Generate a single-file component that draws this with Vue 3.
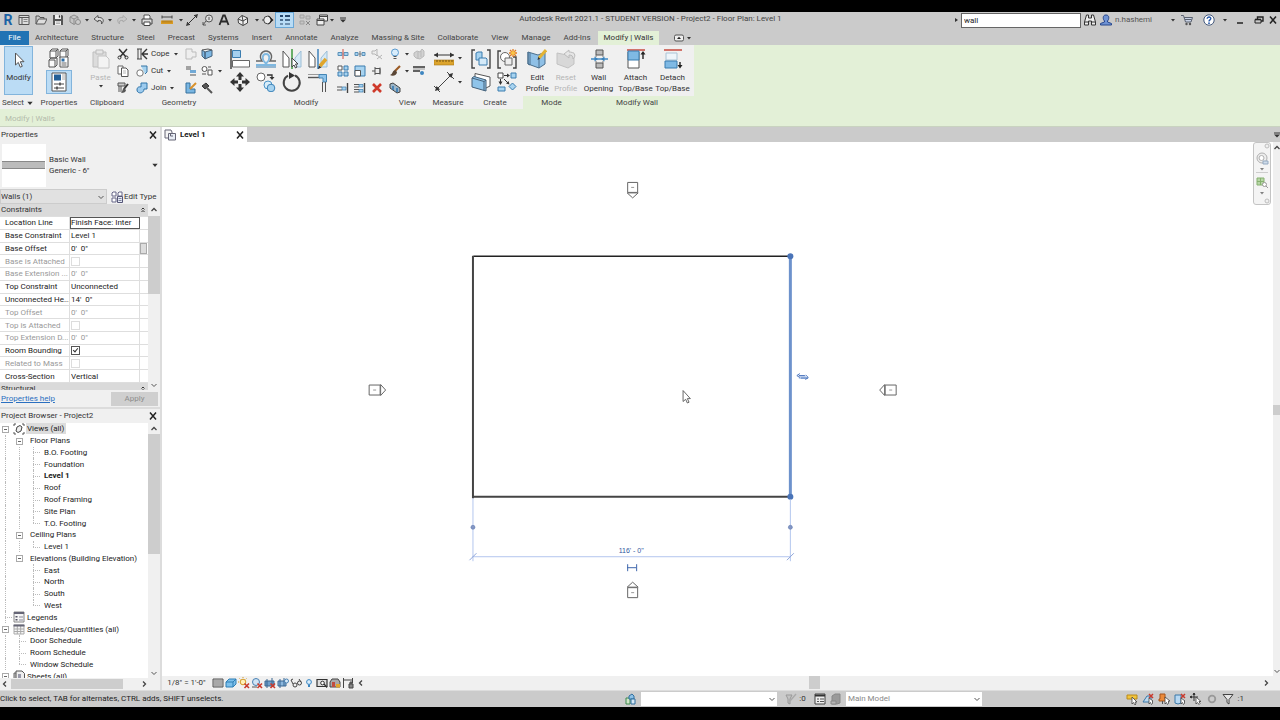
<script setup>
import { ref } from 'vue'

const search = ref('wall')

const quick = [
  { i: 'home', l: 'Home' }, { i: 'open', l: 'Open' }, { i: 'save', l: 'Save' },
  { i: 'sync', l: 'Synchronize' }, { i: 'caret', l: 'Synchronize options' },
  { i: 'undo', l: 'Undo' }, { i: 'caret', l: 'Undo list' },
  { i: 'redo', l: 'Redo' }, { i: 'caret', l: 'Redo list' },
  { i: 'print', l: 'Print' },
  { i: 'ruler', l: 'Measure' }, { i: 'caret', l: 'Measure options' },
  { i: 'dim', l: 'Aligned dimension' }, { i: 'tag', l: 'Tag' }, { i: 'text', l: 'Text' },
  { i: 'house', l: '3D view' }, { i: 'caret', l: '3D view options' },
  { i: 'section', l: 'Section' }, { i: 'thin', l: 'Thin lines', on: true },
  { i: 'closewin', l: 'Close inactive' }, { i: 'switchwin', l: 'Switch windows' },
  { i: 'caret', l: 'Window list' }, { i: 'custom', l: 'Customize' }
]

const tabs = ['Architecture', 'Structure', 'Steel', 'Precast', 'Systems', 'Insert', 'Annotate', 'Analyze',
  'Massing & Site', 'Collaborate', 'View', 'Manage', 'Add-Ins']

const geometry = [
  { i: 'cope', t: 'Cope', a: 'notch', b: 'face' },
  { i: 'cut', t: 'Cut', a: 'beam', b: 'demo', c: true },
  { i: 'join', t: 'Join', a: 'paint', b: 'hammer' }
]
const modifyBig = ['align', 'offset', 'mirrorpick', 'mirrordraw', 'move', 'copy', 'rotate', 'trim']
const modifySmall = ['split', 'splitgap', 'unpin', 'array', 'scale', 'pin', 'trim1', 'trim2', 'delete']
const create = ['assembly', 'group', 'parts', 'similar']
const wallTools = [
  { i: 'opening', a: 'Wall', b: 'Opening' },
  { i: 'attach', a: 'Attach', b: 'Top/Base' },
  { i: 'detach', a: 'Detach', b: 'Top/Base' }
]

const props = [
  { n: 'Location Line', v: 'Finish Face: Inter', focus: true },
  { n: 'Base Constraint', v: 'Level 1' },
  { n: 'Base Offset', v: '0\'  0"', btn: true },
  { n: 'Base is Attached', c: false, off: true },
  { n: 'Base Extension ...', v: '0\'  0"', off: true },
  { n: 'Top Constraint', v: 'Unconnected' },
  { n: 'Unconnected He...', v: '14\'  0"' },
  { n: 'Top Offset', v: '0\'  0"', off: true },
  { n: 'Top is Attached', c: false, off: true },
  { n: 'Top Extension D...', v: '0\'  0"', off: true },
  { n: 'Room Bounding', c: true },
  { n: 'Related to Mass', c: false, off: true },
  { n: 'Cross-Section', v: 'Vertical' }
]

// g: one letter per guide cell. b box, i icon, v line, t tee, l elbow, s blank
const tree = [
  { g: 'bi', t: 'Views (all)', icon: 'views', sel: true },
  { g: 'vb', t: 'Floor Plans' },
  { g: 'vvt', t: 'B.O. Footing' },
  { g: 'vvt', t: 'Foundation' },
  { g: 'vvt', t: 'Level 1', bold: true },
  { g: 'vvt', t: 'Roof' },
  { g: 'vvt', t: 'Roof Framing' },
  { g: 'vvt', t: 'Site Plan' },
  { g: 'vvl', t: 'T.O. Footing' },
  { g: 'vb', t: 'Ceiling Plans' },
  { g: 'vvl', t: 'Level 1' },
  { g: 'vb', t: 'Elevations (Building Elevation)' },
  { g: 'vst', t: 'East' },
  { g: 'vst', t: 'North' },
  { g: 'vst', t: 'South' },
  { g: 'vsl', t: 'West' },
  { g: 'ti', t: 'Legends', icon: 'legend' },
  { g: 'bi', t: 'Schedules/Quantities (all)', icon: 'schedule' },
  { g: 'vt', t: 'Door Schedule' },
  { g: 'vt', t: 'Room Schedule' },
  { g: 'vl', t: 'Window Schedule' },
  { g: 'bi', t: 'Sheets (all)', icon: 'sheets' }
]

const viewBar = ['detail', 'style', 'sun', 'shadow', 'crop', 'showcrop', 'glasses', 'reveal', 'temp', 'analytic', 'constraint']
const statusRight = ['sellink', 'selunder', 'selpin', 'selface', 'drag', 'gear', 'funnel']
</script>

<template>
  <svg class="defs" aria-hidden="true">
    <symbol id="caret" viewBox="0 0 6 6"><path d="M1 2h4L3 4.500z" fill="#333" /></symbol>
    <symbol id="home" viewBox="0 0 12 12"><path d="M1 1.500h10v9H1z" fill="#ddd" stroke="#555" /><path d="M1 3.500h10M4 3.500v7" stroke="#555" /><path d="M5.500 5.500h4M5.500 7.500h4" stroke="#888" /></symbol>
    <symbol id="open" viewBox="0 0 12 12"><path d="M1 10V2h3l1 1.500h4V5" fill="none" stroke="#555" /><path d="M1 10l2.500-5H12l-2.500 5z" fill="#ddd" stroke="#555" /></symbol>
    <symbol id="save" viewBox="0 0 12 12"><path d="M1 1h9l1 1v9H1z" fill="#555" /><path d="M3 1h6v4H3zM3 7h6v4H3z" fill="#eee" /><path d="M7 1.500h1v2H7zM4 8h4M4 9.500h4" stroke="#777" stroke-width=".5" /></symbol>
    <symbol id="sync" viewBox="0 0 12 12"><path d="M1 3l4-2 4 2v5l-4 2.500L1 8zM1 3l4 2 4-2M5 5v5" fill="#c5c5c5" stroke="#8d8d8d" /><circle cx="9" cy="8" r="2.500" fill="#ccc" stroke="#8d8d8d" /></symbol>
    <symbol id="undo" viewBox="0 0 12 12"><path d="M5 1.500L1 5l4 3V6.500c3-.5 4 .5 3.500 3.500C12 6.500 10 3 5 3.500z" fill="#ddd" stroke="#555" /></symbol>
    <symbol id="redo" viewBox="0 0 12 12"><path d="M7 1.500L11 5 7 8V6.500c-3-.5-4 .5-3.500 3.500C0 6.500 2 3 7 3.500z" fill="#c8c8c8" stroke="#aaa" /></symbol>
    <symbol id="print" viewBox="0 0 12 12"><path d="M3 5V1h5l1 1v3" fill="#fff" stroke="#555" /><path d="M1 5h10v5H1z" fill="#ddd" stroke="#444" /><path d="M3 8h6v3.500H3z" fill="#fff" stroke="#444" /></symbol>
    <symbol id="ruler" viewBox="0 0 12 12"><path d="M1 3h10M1 1.500v3M11 1.500v3" stroke="#444" /><path d="M0 6.500h12v3.500H0z" fill="#d99a22" /><path d="M2 6.500v2M4 6.500v2M6 6.500v2M8 6.500v2M10 6.500v2" stroke="#7c5510" stroke-width=".6" /></symbol>
    <symbol id="dim" viewBox="0 0 12 12"><path d="M2 10l8-8M1 8l3 3M8 1l3 3" stroke="#333" /><path d="M0 12l3.500-1L1 8.500zM12 0L8.500 1 11 3.500z" fill="#333" /></symbol>
    <symbol id="tag" viewBox="0 0 12 12"><circle cx="7" cy="4.500" r="3.500" fill="#ddd" stroke="#555" /><path d="M7 3v3M4 7l-3 4M1 8v3h3" stroke="#555" fill="none" /></symbol>
    <symbol id="text" viewBox="0 0 12 12"><path d="M1.500 11L5.200 1.500h1.600L10.500 11M3.500 7.500h5" fill="none" stroke="#2b2b2b" stroke-width="1.800" /></symbol>
    <symbol id="house" viewBox="0 0 12 12"><path d="M1 5l4-3.500L10.500 4v5L6 11.500 1.500 9z" fill="#eee" stroke="#444" /><path d="M1 5l5 2 5-3M6 7v4.500M5 1.500L6 7" fill="none" stroke="#444" /></symbol>
    <symbol id="section" viewBox="0 0 12 12"><circle cx="5.500" cy="6" r="3.800" fill="#eee" stroke="#444" /><path d="M6 1l5.500 5L6 11l3-5z" fill="#222" /><path d="M0 6h2" stroke="#444" /></symbol>
    <symbol id="thin" viewBox="0 0 12 12"><path d="M1 2h3M6 2h5" stroke="#26476b" stroke-width="2" /><path d="M1 6h3M6 6h5" stroke="#26476b" stroke-width="1.500" /><path d="M1 10h3M6 10h5" stroke="#26476b" /></symbol>
    <symbol id="closewin" viewBox="0 0 12 12"><path d="M1 1h4v3H1zM1 7h4v3H1zM7 2h4v3H7z" fill="#c5c5c5" stroke="#a2a2a2" /><path d="M7 7l4 4M11 7l-4 4" stroke="#888" /></symbol>
    <symbol id="switchwin" viewBox="0 0 12 12"><path d="M3.500 1h8v6h-8zM3.500 2.500h8" fill="#eee" stroke="#444" /><path d="M1 5h7v6H1zM1 6.500h7" fill="#eee" stroke="#444" /></symbol>
    <symbol id="custom" viewBox="0 0 6 6"><path d="M0 1h6" stroke="#333" /><path d="M0 2.500h6L3 5.500z" fill="#333" /></symbol>
    <symbol id="binoc" viewBox="0 0 12 12"><path d="M2.500 1h2v3h3V1h2l2 7v3h-4V7h-3v4h-4V8z" fill="#eee" stroke="#333" /><path d="M1 8h3.500M7.500 8H11" stroke="#333" /></symbol>
    <symbol id="user" viewBox="0 0 12 12"><path d="M6 1c3 0 3 2.500 2.500 4.500L7.500 7v1l4 1.500V11H.5V9.500l4-1.500V7l-1-1.500C3 3.500 3 1 6 1z" fill="#6f93d4" stroke="#27468c" /></symbol>
    <symbol id="cart" viewBox="0 0 12 12"><path d="M0 1.500h2.500L4.500 8h5.500l1.500-4.500H3" fill="#c9d3e6" stroke="#5b6270" /><path d="M4 5.500h6.500" stroke="#5b6270" /><circle cx="5.500" cy="10" r="1.200" fill="#555" /><circle cx="9" cy="10" r="1.200" fill="#555" /></symbol>
    <symbol id="help" viewBox="0 0 12 12"><circle cx="6" cy="6" r="5.200" fill="#fff" stroke="#44597c" /><path d="M4.200 4.800C4.200 2.300 8 2.500 7.800 4.700 7.700 5.900 6 6 6 7.400" fill="none" stroke="#2557a8" stroke-width="1.400" /><circle cx="6" cy="9.200" r=".9" fill="#2557a8" /></symbol>
    <symbol id="min" viewBox="0 0 10 10"><path d="M2 8h6" stroke="#222" stroke-width="1.500" /></symbol>
    <symbol id="restore" viewBox="0 0 10 10"><path d="M3.500 4V2H9v4H7" fill="none" stroke="#222" stroke-width="1.400" /><path d="M1 4.500h6V8H1z" fill="none" stroke="#222" /><path d="M1 4.500h6" stroke="#222" stroke-width="1.600" /></symbol>
    <symbol id="close" viewBox="0 0 10 10"><path d="M2 1.500l6 7M8 1.500l-6 7" stroke="#222" stroke-width="1.500" /></symbol>
    <symbol id="panelmode" viewBox="0 0 10 8"><rect x=".5" y="1" width="9" height="6" rx="1.500" fill="#eee" stroke="#555" /><path d="M3 5h4L5 2.800z" fill="#222" /></symbol>

    <symbol id="arrow" viewBox="0 0 12 18"><path d="M2.500 2v12l2.800-2.600 2 4.800 2-.9-2-4.600h3.700z" fill="#fff" stroke="#555" /></symbol>
    <symbol id="typeprops" viewBox="0 0 22 20"><path d="M2 3l2-2h6v7l-2 2H2zM12 3l2-2h6v7l-2 2h-6zM1 12l2-2h6v7l-2 2H1zM2 3h6v7M12 3h6v7M8 3l2-2M18 3l2-2M1 12h6v7" fill="#fafafa" stroke="#555" /><path d="M12 9h8v10h-8z" fill="#fff" stroke="#555" /><path d="M13.500 10.500h3v3h-3z" fill="#2c6ca5" /><path d="M13.500 15h5M13.500 17h5" stroke="#666" /></symbol>
    <symbol id="propspal" viewBox="0 0 16 20"><path d="M1 1h14v18H1z" fill="#fff" stroke="#555" /><path d="M3 2.500h7v6H3z" fill="#235f97" /><path d="M11 3h3M11 5h3M11 7h3" stroke="#aaa" /><path d="M3 12h10M3 16h10" stroke="#444" /><path d="M9 10.500v3M6 14.500v3" stroke="#444" stroke-width="1.500" /></symbol>
    <symbol id="paste" viewBox="0 0 20 20"><path d="M2 3h13v15H2z" fill="#dcdcdc" stroke="#bebebe" /><path d="M5 1h7v4H5z" fill="#e6e6e6" stroke="#bbb" /><path d="M7 7h8l3 3v9H7z" fill="#f3f3f3" stroke="#c4c4c4" /></symbol>
    <symbol id="scissors" viewBox="0 0 12 12"><path d="M2 1l7 8M10 1L3 9" stroke="#333" stroke-width="1.500" /><circle cx="2.500" cy="9.500" r="1.500" fill="none" stroke="#333" /><circle cx="9.500" cy="9.500" r="1.500" fill="none" stroke="#333" /></symbol>
    <symbol id="copyclip" viewBox="0 0 12 12"><path d="M1 1h5v8H1z" fill="#fff" stroke="#666" /><path d="M4.500 3H9l2 2v6.500H4.500z" fill="#fff" stroke="#555" /><path d="M6 6h3M6 8h3" stroke="#999" stroke-width=".7" /></symbol>
    <symbol id="match" viewBox="0 0 12 12"><path d="M1 1h7v3H1zM1 5h4M1 7h4M1 9h4" fill="#ccc" stroke="#555" /><path d="M11 2L7 7" stroke="#333" stroke-width="2" /><path d="M7 6c-2 1-1 3-3 5 3 0 5-1 5-3z" fill="#555" /></symbol>
    <symbol id="cope" viewBox="0 0 12 12"><path d="M2 1v10M5 1v10M1 1h5M1 11h5" stroke="#444" /><path d="M11 1L6 6l5 5M7 6h5" fill="none" stroke="#333" stroke-width="1.400" /></symbol>
    <symbol id="cut" viewBox="0 0 12 12"><path d="M5 1h6v6l-2 2" fill="#a7d3ef" stroke="#3977a5" /><circle cx="4" cy="8" r="3.200" fill="#fff" stroke="#777" /></symbol>
    <symbol id="join" viewBox="0 0 12 12"><path d="M5 1h6v6H8c0 5-7 5-7 1 0-3 2-3.500 4-3z" fill="#9dcbee" stroke="#2f74a9" /></symbol>
    <symbol id="notch" viewBox="0 0 12 12"><path d="M1 1h6v3h4v5H7v2H1z" fill="#eee" stroke="#bbb" /></symbol>
    <symbol id="beam" viewBox="0 0 12 12"><path d="M1 2h5M1 4h5M5 7h6M5 10h6" stroke="#555" /><path d="M5 5h6v3H5z" fill="#70a9d6" /></symbol>
    <symbol id="paint" viewBox="0 0 12 12"><path d="M1 1v10h9V7H5V1z" fill="#79b6e2" stroke="#36719d" /><path d="M11 1L5 7" stroke="#d9912a" stroke-width="2" /></symbol>
    <symbol id="face" viewBox="0 0 12 12"><path d="M1 2l3 2v7L1 8zM4 4l7-2v6l-7 3z" fill="#7db7e3" stroke="#44617a" /><path d="M1 2l6-1 4 1" fill="none" stroke="#555" /></symbol>
    <symbol id="demo" viewBox="0 0 12 12"><circle cx="3.500" cy="4" r="2.500" fill="#fff" stroke="#555" /><path d="M7 5h4v5H7zM7 2h3M1 9h4" fill="#fff" stroke="#555" /></symbol>
    <symbol id="hammer" viewBox="0 0 12 12"><path d="M1 4l4-3 3 3-4 3z" fill="#555" stroke="#333" /><path d="M6 6l5 5" stroke="#555" stroke-width="2" /></symbol>

    <symbol id="align" viewBox="0 0 20 20"><path d="M1 0v20" stroke="#444" stroke-width="1.500" /><path d="M2.500 1.500h8v7h-8z" fill="#a5d0ef" stroke="#3a7caf" /><path d="M2.500 11.500h17V18h-17z" fill="#fff" stroke="#666" /></symbol>
    <symbol id="offset" viewBox="0 0 20 20"><path d="M0 12h6c-3.500-5-.5-10 4-10s7.500 5 4 10h6" fill="none" stroke="#666" stroke-width="1.400" /><path d="M0 16h9.500V14C5 10 6.500 5 10 5s5 5 .5 9v2H20" fill="none" stroke="#7fb8e0" stroke-width="1.800" /><path d="M0 18h20" stroke="#3a7caf" /></symbol>
    <symbol id="mirrorpick" viewBox="0 0 20 20"><path d="M1 2l6 7v9H1z" fill="#fff" stroke="#555" /><path d="M19 2l-6 7v9h6z" fill="#d5e9f6" stroke="#9bbdd6" /><path d="M10 0v20" stroke="#3c9a3c" stroke-width="1.500" /><path d="M10 9v9l2-2 1.500 3 1.500-1-1.500-3H16z" fill="#fff" stroke="#444" /></symbol>
    <symbol id="mirrordraw" viewBox="0 0 20 20"><path d="M1 2l6 7v9H1z" fill="#fff" stroke="#555" /><path d="M19 2l-6 7v9h6z" fill="#d5e9f6" stroke="#9bbdd6" /><path d="M10 0v20" stroke="#3f83bd" stroke-width="1.500" /><path d="M18 10l-6 7" stroke="#e0a62b" stroke-width="3.500" /><path d="M10 20l1-3.500 2.500 2z" fill="#333" /></symbol>
    <symbol id="move" viewBox="0 0 20 20"><path d="M10 0l4 4.500h-2.500V8h-3V4.500H6zM10 20l4-4.500h-2.500V12h-3v3.500H6zM0 10l4.500-4v2.500H8v3H4.500V14zM20 10l-4.500-4v2.500H12v3h3.500V14z" fill="#333" /></symbol>
    <symbol id="copy" viewBox="0 0 20 20"><circle cx="5" cy="5" r="4" fill="#fff" stroke="#666" /><circle cx="12" cy="13" r="4" fill="#d9edf9" stroke="#4b94c8" /><circle cx="15" cy="16" r="3.800" fill="#a7d3f0" stroke="#3a82b8" /><path d="M11 3h5v2" fill="none" stroke="#333" stroke-width="1.300" /><path d="M13.500 5h5L16 8z" fill="#333" /></symbol>
    <symbol id="rotate" viewBox="0 0 20 20"><path d="M13 3.500A8 8 0 1 1 6 3.700" fill="none" stroke="#444" stroke-width="2" /><path d="M7 0l6 3.500L7 7z" fill="#333" /></symbol>
    <symbol id="trim" viewBox="0 0 20 20"><path d="M0 5.500h12" stroke="#555" stroke-width="1.400" /><path d="M0 2.500h13" stroke="#999" /><path d="M11 2.500h7.500V10H15V6h-4z" fill="#8fc4ea" stroke="#4485b4" /><path d="M14.500 10v10M17.500 10v10" stroke="#555" /></symbol>
    <symbol id="split" viewBox="0 0 12 12"><path d="M1 4.500h4v3H1zM7 4.500h4v3H7z" fill="#a9d2ef" stroke="#5a91b8" /><path d="M6 1v10" stroke="#d24d3e" /></symbol>
    <symbol id="splitgap" viewBox="0 0 12 12"><path d="M1 4.500h3v3H1zM8 4.500h3v3H8z" fill="#a9d2ef" stroke="#5a91b8" /><path d="M4.500 6h3M6 3v6" stroke="#777" /></symbol>
    <symbol id="unpin" viewBox="0 0 12 12"><path d="M1 3h3l2-2v7L4 6H1zM6 7l5 4M11 7l-5 4" fill="#eee" stroke="#b5b5b5" /></symbol>
    <symbol id="array" viewBox="0 0 12 12"><path d="M1 1h4v4H1z" fill="#fff" stroke="#555" /><path d="M7 1h4v4H7zM1 7h4v4H1zM7 7h4v4H7z" fill="#a7d3f0" stroke="#3a7caf" /></symbol>
    <symbol id="scale" viewBox="0 0 12 12"><path d="M1 1h10v10H1z" fill="#a7d3f0" stroke="#3a7caf" /><path d="M1 5.500h5.500V11H1z" fill="#fff" stroke="#555" /></symbol>
    <symbol id="pin" viewBox="0 0 12 12"><path d="M1 6h3M4 2v8M4 3.500h5v5H4M9 2.500v7" fill="#eee" stroke="#555" /></symbol>
    <symbol id="trim1" viewBox="0 0 12 12"><path d="M0 5h5M0 8h5" stroke="#555" /><path d="M5 5h4v3H5z" fill="#a7d3f0" stroke="#3a7caf" stroke-width=".7" /><path d="M10.500 1v10" stroke="#444" stroke-width="1.400" /></symbol>
    <symbol id="trim2" viewBox="0 0 12 12"><path d="M0 2.500h5M0 5h5M0 7.500h5M0 10h5" stroke="#555" /><path d="M5 2.500h4V5H5zM5 7.500h4V10H5z" fill="#a7d3f0" stroke="#3a7caf" stroke-width=".7" /><path d="M10.500 1v10" stroke="#444" stroke-width="1.400" /></symbol>
    <symbol id="delete" viewBox="0 0 12 12"><path d="M2 2l8 8M10 2l-8 8" stroke="#cf3a2b" stroke-width="2.600" /></symbol>
    <symbol id="bulb" viewBox="0 0 12 12"><circle cx="6" cy="4.500" r="3.500" fill="#d8ecfb" stroke="#5a9bd0" /><path d="M4.500 8.500h3M4.500 10.500h3" stroke="#555" /></symbol>
    <symbol id="overrideview" viewBox="0 0 12 12"><path d="M1 5l3-2 3 1 2-3 2 2v5l-4 3-4-1-2-2zM5 4v7M8 3v6" fill="#d2d2d2" stroke="#b9b9b9" /></symbol>
    <symbol id="brush" viewBox="0 0 12 12"><path d="M11 1L6 6" stroke="#9a5a25" stroke-width="2.200" /><path d="M6 5c-3 1-2 4-5 5 3 2 7 0 7-3z" fill="#5a4636" /></symbol>
    <symbol id="linework" viewBox="0 0 12 12"><path d="M0 2h12M0 6h7" stroke="#333" stroke-width="1.500" /><path d="M0 4h12" stroke="#777" stroke-width=".7" /><circle cx="9" cy="8" r="2" fill="#3e86c0" /></symbol>
    <symbol id="selbox" viewBox="0 0 12 12"><path d="M1 2l3-1 7 5v4l-3 1-7-5z" fill="#9cb6c9" stroke="#444" /><path d="M4 4v4M8 6v4" stroke="#2f76b0" stroke-width="1.500" /></symbol>
    <symbol id="tape" viewBox="0 0 20 20"><path d="M0 7h20" stroke="#333" /><path d="M0 7l4-2.500v5zM20 7l-4-2.500v5z" fill="#333" /><path d="M0 12h20v5H0z" fill="#dca42c" stroke="#a97614" stroke-width=".6" /><path d="M3 12v2M6 12v2M9 12v2M12 12v2M15 12v2M18 12v2" stroke="#77530e" /></symbol>
    <symbol id="dimbig" viewBox="0 0 20 20"><path d="M3 17L17 3M0 14l6 6M13 0l7 7" stroke="#444" /><path d="M1 19l5-1.500L2.500 14zM19 1l-5 1.500L17.500 6z" fill="#333" /></symbol>
    <symbol id="assembly" viewBox="0 0 20 20"><path d="M4 1H1v18h3M16 1h3v18h-3" fill="none" stroke="#444" stroke-width="1.400" /><path d="M5 4l2-1h4v8H5z" fill="#a7d3f0" stroke="#3a7caf" /><path d="M8 9h7l1 1v6H8z" fill="#d5eaf8" stroke="#3a7caf" /></symbol>
    <symbol id="group" viewBox="0 0 20 20"><path d="M4 2H1v17h3M16 8h3v11h-3" fill="none" stroke="#444" stroke-width="1.400" /><circle cx="8" cy="8" r="4.500" fill="#fff" stroke="#666" /><path d="M8 9h7v7H8z" fill="#eee" stroke="#666" /><path d="M16 0v8M12 4h8M13 1l6 6M19 1l-6 6" stroke="#e27a1c" stroke-width="1.300" /><circle cx="16" cy="4" r="2" fill="#f8c64a" /></symbol>
    <symbol id="parts" viewBox="0 0 20 20"><path d="M4 1.500l15 3.500v9l-4 2L4 11z" fill="#fff" stroke="#555" /><path d="M1 6l2-1.500 12 3.500v11L1 15z" fill="#8fc4ea" stroke="#44617a" /><path d="M1 6l12 3.500v9M13 9.500L15 8" fill="none" stroke="#44617a" /></symbol>
    <symbol id="similar" viewBox="0 0 20 20"><path d="M1 1h5v5H1z" fill="#fff" stroke="#444" /><path d="M14 1h5v5h-5zM1 15h7v4H1z" fill="#a7d3f0" stroke="#3a7caf" /><path d="M15.500 11l3.500 3.500-3.500 3.500-3.500-3.500z" fill="#a7d3f0" stroke="#3a7caf" /><path d="M7 3.500h4M3.500 7v3M7 7l4 4" stroke="#333" /><path d="M10 1.500l3 2-3 2zM1.500 9.500h4l-2 3.500zM12.500 12.500L9 11.500l2.500-2.500z" fill="#333" /></symbol>
    <symbol id="editprofile" viewBox="0 0 20 20"><path d="M1 3l10 3 7-3v12l-6 4-11-4z" fill="#8fc0e6" stroke="#4b6f8c" /><path d="M1 3v12l2 1V4M12 7v12" fill="none" stroke="#4b6f8c" /><path d="M19 1l-7 8" stroke="#e3b334" stroke-width="3" /><path d="M10.500 11l.7-3 2 1.700z" fill="#333" /></symbol>
    <symbol id="resetprofile" viewBox="0 0 20 20"><path d="M1 4l10 2 7-2v11l-6 4-11-4z" fill="#d8d8d8" stroke="#c2c2c2" /><path d="M13 1l-5 4 5 4V6c3 0 4 1 4 4 4-4 1-7-4-7z" fill="#e6e6e6" stroke="#bbb" /></symbol>
    <symbol id="opening" viewBox="0 0 20 20"><path d="M7 1h7v5H7zM7 14h7v5H7z" fill="#bbb" stroke="#555" /><path d="M7 6v8M14 6v8" stroke="#777" stroke-dasharray="2 1" /><path d="M2 10h17" stroke="#4a90c8" stroke-width="1.600" /><path d="M9 10L5.500 7.500v5zM12 10l3.500-2.500v5z" fill="#3a82bc" /></symbol>
    <symbol id="attach" viewBox="0 0 20 20"><path d="M1 1h18" stroke="#c74b40" stroke-width="1.500" /><path d="M2 3h11v16H2z" fill="#fff" stroke="#555" /><path d="M2 2h11v9H2z" fill="#7fb9e4" stroke="#3a7caf" /><path d="M17 4v6" stroke="#222" stroke-width="1.400" /><path d="M14.500 5.500L17 2l2.500 3.500z" fill="#222" /></symbol>
    <symbol id="detach" viewBox="0 0 20 20"><path d="M1 1h18" stroke="#c74b40" stroke-width="1.500" /><path d="M3 4h11v7H3z" fill="#eef5fa" stroke="#aac4d6" /><path d="M2 12h12v7H2z" fill="#7fb9e4" stroke="#3a7caf" /><path d="M17 13v5" stroke="#222" stroke-width="1.400" /><path d="M14.500 16l2.500 3.500 2.500-3.500z" fill="#222" /></symbol>

    <symbol id="plan" viewBox="0 0 12 12"><path d="M1 1h6l1 2v6H1z" fill="#f5f5f5" stroke="#667" /><path d="M4.500 4.500h7V11h-7z" fill="#e8edf5" stroke="#667" /><path d="M6.500 4.500V7h2.500" fill="none" stroke="#667" /></symbol>
    <symbol id="edittype" viewBox="0 0 12 12"><path d="M1 2l1-1h3v4H1zM7 2l1-1h3v4H7zM1 7h4v4H1z" fill="#fff" stroke="#668" /><path d="M6.500 5.500h5v6h-5z" fill="#e5ecf6" stroke="#557" /><path d="M7.500 7.500h3M7.500 9.500h3" stroke="#557" stroke-width=".7" /></symbol>
    <symbol id="chevd" viewBox="0 0 8 8"><path d="M1.500 3L4 5.500 6.500 3" fill="none" stroke="#555" /></symbol>
    <symbol id="chevu" viewBox="0 0 8 8"><path d="M1.500 5L4 2.500 6.500 5" fill="none" stroke="#444" stroke-width="1.300" /></symbol>
    <symbol id="chevl" viewBox="0 0 8 8"><path d="M5 1.500L2.500 4 5 6.500" fill="none" stroke="#444" stroke-width="1.300" /></symbol>
    <symbol id="chevr" viewBox="0 0 8 8"><path d="M3 1.500L5.500 4 3 6.500" fill="none" stroke="#444" stroke-width="1.300" /></symbol>
    <symbol id="collapse" viewBox="0 0 8 8"><path d="M2.500 3.500L4 2l1.500 1.500M2.500 6L4 4.500 5.500 6" fill="none" stroke="#333" /></symbol>
    <symbol id="views" viewBox="0 0 12 12"><path d="M1 3V1h2M9 1h2v2M11 9v2H9M3 11H1V9" fill="none" stroke="#555" /><path d="M4 4l3-1.500L9 4 8 8 5 9.500 3 8z" fill="#eee" stroke="#444" /></symbol>
    <symbol id="legend" viewBox="0 0 12 12"><path d="M1 1h10v10H1z" fill="#f6f6f6" stroke="#888" /><path d="M1 2h10" stroke="#667" stroke-width="2" /><path d="M2.500 5h2v1.500h-2zM2.500 8h2v1.500h-2z" fill="#556" /><path d="M6 6h4M6 9h4" stroke="#889" /></symbol>
    <symbol id="schedule" viewBox="0 0 12 12"><path d="M1 2h10v9H1zM1 6h10M1 8.500h10M4.300 3v8M7.700 3v8" fill="#f6f6f6" stroke="#aaa" /><path d="M.5 2.500h11" stroke="#667" stroke-width="2" /></symbol>
    <symbol id="sheets" viewBox="0 0 12 12"><path d="M1 3h7v8H1z" fill="#ccc" stroke="#666" /><path d="M3 1h6l2.500 2.500V10H3z" fill="#eee" stroke="#555" /><path d="M5 4h3v4H5z" fill="#99a" /></symbol>

    <symbol id="detail" viewBox="0 0 12 12"><path d="M1 2h10v8H1z" fill="#ccc" stroke="#555" /><path d="M1 4h10M1 6h10M1 8h10M3 2v8M5 2v8M7 2v8M9 2v8" stroke="#888" stroke-width=".6" /></symbol>
    <symbol id="style" viewBox="0 0 12 12"><path d="M1 5l3-3h7v5l-3 3H1z" fill="#7cc0ec" stroke="#2f7fb5" /><path d="M1 5h7v5M8 5l3-3" fill="none" stroke="#2f7fb5" /></symbol>
    <symbol id="sun" viewBox="0 0 12 12"><circle cx="5" cy="5" r="2.800" fill="#fff1b8" stroke="#d59a28" /><path d="M5 0v1M0 5h1M1.500 1.500l.8.8M8.500 1.500l-.8.8" stroke="#d59a28" /><path d="M6.500 6.500l4.500 4.500M11 6.500L6.500 11" stroke="#c93a2c" stroke-width="1.600" /></symbol>
    <symbol id="shadow" viewBox="0 0 12 12"><circle cx="5" cy="5" r="3.500" fill="#cfe4f5" stroke="#4981b3" /><path d="M1 10h5" stroke="#888" stroke-width="1.500" /><path d="M6.500 6.500l4.500 4.500M11 6.500L6.500 11" stroke="#c93a2c" stroke-width="1.600" /></symbol>
    <symbol id="crop" viewBox="0 0 12 12"><path d="M1 4h9v5H1zM3 2v9M8 1v8" fill="#6d9fcb" stroke="#3b6791" /><path d="M6.500 6.500l4.500 4.500M11 6.500L6.500 11" stroke="#c93a2c" stroke-width="1.600" /></symbol>
    <symbol id="showcrop" viewBox="0 0 12 12"><path d="M1 4h8v5H1zM3 2v9M7 1v8" fill="#8bb7de" stroke="#3b6791" /><circle cx="9.500" cy="4" r="2" fill="#d8ecfb" stroke="#4981b3" /></symbol>
    <symbol id="glasses" viewBox="0 0 12 12"><circle cx="5" cy="8" r="2" fill="none" stroke="#444" /><circle cx="9.500" cy="6" r="2" fill="none" stroke="#444" /><path d="M3 7L1 3l2-1M11 5l-2-3" fill="none" stroke="#444" /></symbol>
    <symbol id="reveal" viewBox="0 0 12 12"><circle cx="6" cy="5" r="2.400" fill="#d8ecfb" stroke="#3a86c2" /><path d="M6 7.500V10" stroke="#3a86c2" stroke-width="2" /></symbol>
    <symbol id="temp" viewBox="0 0 12 12"><path d="M1 2.500h10v7H1z" fill="#ddd" stroke="#333" stroke-width="1.200" /><circle cx="6.500" cy="6" r="1.800" fill="#fff" stroke="#333" /><path d="M8 7l3 3.500" stroke="#333" stroke-width="1.200" /></symbol>
    <symbol id="analytic" viewBox="0 0 12 12"><path d="M1 5l2-3h6l2 3v5H1z" fill="#aaa" stroke="#444" /><path d="M3 5h3v5H3z" fill="#c14d3f" /><path d="M7 7h4v3.500H7z" fill="#e2a72d" /></symbol>
    <symbol id="constraint" viewBox="0 0 12 12"><path d="M1.500 1v10M1 3h10M10.500 1v5" stroke="#444" fill="none" /><path d="M7 7h4v4H7zM8 7V5h2v2" fill="#888" stroke="#444" /></symbol>

    <symbol id="workset" viewBox="0 0 12 12"><path d="M1 5h4v6H1z" fill="#cfe5c8" stroke="#3f8a4e" /><path d="M4 3l3-2 2 2v3H4z" fill="#8ec1e6" stroke="#2f6f9f" /><path d="M6 6h4v5H6z" fill="#d5e8f6" stroke="#2f6f9f" /></symbol>
    <symbol id="editable" viewBox="0 0 12 12"><path d="M1 2h6L5 6v5L3 10V6z" fill="#c2c2c2" stroke="#999" /><path d="M11 1L5 8" stroke="#aaa" stroke-width="1.400" /></symbol>
    <symbol id="options" viewBox="0 0 12 12"><path d="M1 1h10v10H1z" fill="#eee" stroke="#444" /><path d="M1 2.500h10" stroke="#333" stroke-width="2" /><path d="M3 6h2M6 6h4M3 8.500h2M6 8.500h4" stroke="#555" /></symbol>
    <symbol id="optset" viewBox="0 0 12 12"><path d="M2 3l3-2h5v9l-3 1H2z" fill="#9a9a9a" stroke="#888" /><path d="M1 8h5v3H1z" fill="#b5b5b5" stroke="#888" /></symbol>
    <symbol id="sellink" viewBox="0 0 12 12"><path d="M1 2h10v4H1z" fill="#f2c53d" stroke="#b98a1a" /><path d="M6 4v7l1.500-1.500L9 12l1-1-1-2h2z" fill="#fff" stroke="#444" stroke-width=".8" /></symbol>
    <symbol id="selunder" viewBox="0 0 12 12"><path d="M1 9l4-6h4v6z" fill="#bcd9ef" stroke="#3b78a8" /><path d="M7 1l4 4M11 1L7 5" stroke="#c93a2c" stroke-width="1.500" /><path d="M7 5v6l1.500-1.500 1 2 1-1V8H11z" fill="#fff" stroke="#444" stroke-width=".8" /></symbol>
    <symbol id="selpin" viewBox="0 0 12 12"><path d="M2 1h5v5h1v2H1V6h1z" fill="#eb8b3a" stroke="#a8551a" /><path d="M4.500 8v3" stroke="#555" /><path d="M7 4v7l1.500-1.500 1 2 1-1V8H12z" fill="#fff" stroke="#444" stroke-width=".8" /></symbol>
    <symbol id="selface" viewBox="0 0 12 12"><path d="M1 2h6v8l-3 1-3-1z" fill="#b7d8f2" stroke="#3b78a8" /><path d="M7 1l4 4M11 1L7 5" stroke="#c93a2c" stroke-width="1.500" /><path d="M7 5v6l1.500-1.500 1 2 1-1V8H11z" fill="#fff" stroke="#444" stroke-width=".8" /></symbol>
    <symbol id="drag" viewBox="0 0 12 12"><path d="M4 0v8M0 4h8M4 0L3 1.500h2zM0 4l1.500-1v2z" stroke="#333" /><path d="M6 4v7l1.500-1.500 1.500 2 1-1-1-2h2z" fill="#fff" stroke="#444" stroke-width=".8" /></symbol>
    <symbol id="gear" viewBox="0 0 12 12"><circle cx="6" cy="6" r="3.300" fill="none" stroke="#999" stroke-width="1.800" /></symbol>
    <symbol id="funnel" viewBox="0 0 12 12"><path d="M1 1.500h10L7 6.500V11L5 9.500v-3z" fill="#e6e6e6" stroke="#444" /></symbol>
    <symbol id="wheel" viewBox="0 0 14 14"><circle cx="7" cy="6" r="5" fill="#eee" stroke="#b0b0b0" /><circle cx="6.500" cy="6" r="2.500" fill="#fff" stroke="#b0b0b0" /><path d="M8 9h5v3H8z" fill="#cfdcea" stroke="#94a9c0" /></symbol>
    <symbol id="zoomregion" viewBox="0 0 14 14"><path d="M2 2h7v7H2zM2 5.500h7M5.500 2v7" fill="#b7d7a6" stroke="#86b070" /><circle cx="9.500" cy="8.500" r="2" fill="#fff" stroke="#999" /><path d="M11 10l2 2" stroke="#999" /></symbol>
    <symbol id="ring" viewBox="0 0 6 6"><circle cx="3" cy="3" r="2" fill="#eee" stroke="#999" /></symbol>
  </svg>

  <div class="app">
    <header class="titlebar">
      <nav class="quick" aria-label="Quick access">
        <button class="logo" aria-label="Application menu">R</button>
        <button v-for="(q, n) in quick" :key="n" :class="{ on: q.on }" :aria-label="q.l">
          <svg :class="q.i === 'caret' || q.i === 'custom' ? 's6' : 's12'"><use :href="'#' + q.i" /></svg>
        </button>
      </nav>
      <h1>Autodesk Revit 2021.1 - STUDENT VERSION - Project2 - Floor Plan: Level 1</h1>
      <div class="info">
        <span class="tri"></span>
        <input v-model="search" type="text" aria-label="Search">
        <button aria-label="Find"><svg class="s12"><use href="#binoc" /></svg></button>
        <svg class="s12"><use href="#user" /></svg>
        <button class="name">n.hashemi</button>
        <button aria-label="Account menu"><svg class="s6"><use href="#caret" /></svg></button>
        <button aria-label="Store"><svg class="s12"><use href="#cart" /></svg></button>
        <button aria-label="Help"><svg class="s12"><use href="#help" /></svg></button>
        <button aria-label="Help menu"><svg class="s6"><use href="#caret" /></svg></button>
        <button aria-label="Minimize"><svg class="s10"><use href="#min" /></svg></button>
        <button aria-label="Restore"><svg class="s10"><use href="#restore" /></svg></button>
        <button aria-label="Close"><svg class="s10"><use href="#close" /></svg></button>
      </div>
    </header>

    <nav class="tabs" aria-label="Ribbon tabs">
      <button class="file">File</button>
      <button v-for="t in tabs" :key="t">{{ t }}</button>
      <button class="ctx">Modify | Walls</button>
      <button class="mode" aria-label="Ribbon display"><svg class="pm"><use href="#panelmode" /></svg><svg class="s6"><use href="#caret" /></svg></button>
    </nav>

    <div class="ribbon">
      <section class="panel p-select">
        <div class="body">
          <button class="tall on"><svg class="arrow"><use href="#arrow" /></svg><span>Modify</span></button>
        </div>
        <h2>Select <svg class="s8"><use href="#caret" /></svg></h2>
      </section>
      <section class="panel p-props">
        <div class="body stack">
          <button aria-label="Type properties"><svg class="s22"><use href="#typeprops" /></svg></button>
          <button class="on" aria-label="Properties palette"><svg class="s20"><use href="#propspal" /></svg></button>
        </div>
        <h2>Properties</h2>
      </section>
      <section class="panel p-clip">
        <div class="body">
          <button class="tall off" disabled><svg class="s20"><use href="#paste" /></svg><span>Paste</span><svg class="s6"><use href="#caret" /></svg></button>
          <div class="rows">
            <button aria-label="Cut to clipboard"><svg class="s12"><use href="#scissors" /></svg></button>
            <button aria-label="Copy to clipboard"><svg class="s12"><use href="#copyclip" /></svg></button>
            <button aria-label="Match type"><svg class="s12"><use href="#match" /></svg></button>
          </div>
        </div>
        <h2>Clipboard</h2>
      </section>
      <section class="panel p-geo">
        <div class="body rows">
          <div v-for="g in geometry" :key="g.t" class="georow">
            <button class="lab"><svg class="s12"><use :href="'#' + g.i" /></svg><span>{{ g.t }}</span><svg class="s6"><use href="#caret" /></svg></button>
            <button :aria-label="g.a"><svg class="s12"><use :href="'#' + g.a" /></svg></button>
            <button :aria-label="g.b"><svg class="s12"><use :href="'#' + g.b" /></svg></button>
            <svg v-if="g.c" class="s6"><use href="#caret" /></svg>
          </div>
        </div>
        <h2>Geometry</h2>
      </section>
      <section class="panel p-mod">
        <div class="body">
          <div class="bigs">
            <button v-for="m in modifyBig" :key="m" :aria-label="m"><svg class="s20"><use :href="'#' + m" /></svg></button>
          </div>
          <div class="smalls">
            <button v-for="m in modifySmall" :key="m" :aria-label="m"><svg class="s12"><use :href="'#' + m" /></svg></button>
          </div>
        </div>
        <h2>Modify</h2>
      </section>
      <section class="panel p-view">
        <div class="body viewgrid">
          <button aria-label="Hide"><svg class="s12"><use href="#bulb" /></svg></button>
          <svg class="s6"><use href="#caret" /></svg>
          <button aria-label="Override view"><svg class="s12"><use href="#overrideview" /></svg></button>
          <button aria-label="Override graphics"><svg class="s12"><use href="#brush" /></svg></button>
          <svg class="s6"><use href="#caret" /></svg>
          <button aria-label="Linework"><svg class="s12"><use href="#linework" /></svg></button>
          <button aria-label="Selection box"><svg class="s12"><use href="#selbox" /></svg></button>
        </div>
        <h2>View</h2>
      </section>
      <section class="panel p-meas">
        <div class="body stack">
          <button class="wide" aria-label="Measure"><svg class="s20"><use href="#tape" /></svg><svg class="s6"><use href="#caret" /></svg></button>
          <button class="wide" aria-label="Dimension"><svg class="s20"><use href="#dimbig" /></svg><svg class="s6"><use href="#caret" /></svg></button>
        </div>
        <h2>Measure</h2>
      </section>
      <section class="panel p-create">
        <div class="body">
          <div class="bigs two">
            <button v-for="m in create" :key="m" :aria-label="m"><svg class="s20"><use :href="'#' + m" /></svg></button>
          </div>
        </div>
        <h2>Create</h2>
      </section>
      <section class="panel p-mode green">
        <div class="body">
          <button class="tall"><svg class="s20"><use href="#editprofile" /></svg><span>Edit<br>Profile</span></button>
          <button class="tall off" disabled><svg class="s20"><use href="#resetprofile" /></svg><span>Reset<br>Profile</span></button>
        </div>
        <h2>Mode</h2>
      </section>
      <section class="panel p-wall green">
        <div class="body">
          <button v-for="w in wallTools" :key="w.i" class="tall"><svg class="s20"><use :href="'#' + w.i" /></svg><span>{{ w.a }}<br>{{ w.b }}</span></button>
        </div>
        <h2>Modify Wall</h2>
      </section>
    </div>
    <div class="optbar">Modify | Walls</div>

    <main class="work">
      <aside class="side">
        <section class="props">
          <header class="cap"><h2>Properties</h2><button aria-label="Close properties"><svg class="s10"><use href="#close" /></svg></button></header>
          <button class="type">
            <span class="thumb"><span></span></span>
            <span class="tname">Basic Wall<br>Generic - 6"</span>
            <svg class="s8"><use href="#caret" /></svg>
          </button>
          <div class="filter">
            <span class="sel"><select aria-label="Element filter"><option>Walls (1)</option></select><svg class="s8"><use href="#chevd" /></svg></span>
            <button><svg class="s12"><use href="#edittype" /></svg>Edit Type</button>
          </div>
          <div class="gridwrap">
            <div class="grid">
              <div class="ghead">Constraints<svg class="s8"><use href="#collapse" /></svg></div>
              <table>
                <tbody>
                  <tr v-for="(p, n) in props" :key="p.n" :class="{ off: p.off }">
                    <th scope="row"><label :for="'p' + n">{{ p.n }}</label></th>
                    <td :class="{ focus: p.focus }">
                      <input v-if="p.v === undefined" :id="'p' + n" type="checkbox" :checked="p.c" :disabled="p.off">
                      <input v-else :id="'p' + n" type="text" :value="p.v" :disabled="p.off">
                    </td>
                    <td class="end"><button v-if="p.btn" aria-label="Associate parameter"></button></td>
                  </tr>
                </tbody>
              </table>
              <div class="ghead">Structural<svg class="s8"><use href="#collapse" /></svg></div>
            </div>
            <div class="vbar long"><svg class="s8"><use href="#chevu" /></svg><i></i><svg class="s8"><use href="#chevd" /></svg></div>
          </div>
          <footer><a href="#help">Properties help</a><button disabled>Apply</button></footer>
        </section>
        <section class="browser">
          <header class="cap"><h2>Project Browser - Project2</h2><button aria-label="Close browser"><svg class="s10"><use href="#close" /></svg></button></header>
          <div class="treewrap">
            <ul>
              <li v-for="(r, n) in tree" :key="n" :class="{ root: r.icon }">
                <template v-for="(c, k) in r.g" :key="k">
                  <svg v-if="c === 'i'" class="ticon"><use :href="'#' + r.icon" /></svg>
                  <span v-else :class="['g', 'g-' + c]"></span>
                </template>
                <span :class="['txt', { sel: r.sel, bold: r.bold }]">{{ r.t }}</span>
              </li>
            </ul>
            <div class="vbar longer"><svg class="s8"><use href="#chevu" /></svg><i></i><svg class="s8"><use href="#chevd" /></svg></div>
          </div>
          <div class="hbar"><svg class="s8"><use href="#chevl" /></svg><i></i><svg class="s8"><use href="#chevr" /></svg></div>
        </section>
      </aside>

      <section class="view">
        <div class="doctabs">
          <div class="doc"><svg class="s12"><use href="#plan" /></svg><b>Level 1</b><button aria-label="Close view"><svg class="s10"><use href="#close" /></svg></button></div>
          <button class="more" aria-label="View list"><svg class="s6"><use href="#custom" /></svg></button>
        </div>
        <div class="stage">
          <svg class="plan" viewBox="0 0 1111 535" role="img" aria-label="Floor plan">
            <path d="M311 114.500H628" stroke="#222" stroke-width="1.600" />
            <path d="M310.500 114V357" stroke="#444" stroke-width="2" />
            <path d="M310 355.500H628" stroke="#444" stroke-width="2" />
            <path d="M628.500 114V356" stroke="#6d92cc" stroke-width="3" />
            <g fill="#4a74b8"><circle cx="628.500" cy="114.500" r="3" /><circle cx="628.500" cy="355.500" r="3" /></g>
            <g stroke="#b3c6ee" fill="none"><path d="M310.500 357V420M628.500 358V420M310 415.500H629" /><path d="M307 419l7-7M625 419l7-7" stroke="#8fa6da" /></g>
            <g fill="#8497c4" stroke="#5f78b0" stroke-width=".6"><circle cx="310.500" cy="386" r="2" /><circle cx="628.500" cy="386" r="2" /></g>
            <text x="469" y="412" text-anchor="middle" class="dimtext">116' - 0"</text>
            <path d="M465.500 423v7M474.500 423v7M465 426.500h9" stroke="#3e66ad" fill="none" />
            <path d="M637 234.500h7M637 236.500h9" stroke="#a9c0e6" stroke-width="1.500" /><path d="M638 232l-3 2 3 2M643 234h-6M644 233.500l2.500 2.500-3 2M639 236.500h7" stroke="#4f78bf" fill="none" />
            <g stroke="#666" fill="#fff">
              <path d="M465 51l5.500 5 5.500-5z" /><path d="M465.500 40.500h10v10h-10z" />
              <path d="M465 446l5.500-5 5.500 5z" /><path d="M465.500 446.500h10v10h-10z" />
              <path d="M218 243l5 5.500-5 5.500z" /><path d="M206.500 243.500h11v10h-11z" />
              <path d="M723 243l-5 5.500 5 5.500z" /><path d="M723.500 243.500h11v10h-11z" />
            </g>
            <path d="M469 45.500h3M469 451.500h3M210.500 248.500h3M727.500 248.500h3" stroke="#999" />
            <path d="M521 249v11l2.600-2.200 1.700 3.700 1.700-.8-1.700-3.600h3z" fill="#fff" stroke="#444" stroke-width=".8" />
          </svg>
          <div class="navbar">
            <svg class="s6 r"><use href="#ring" /></svg>
            <button aria-label="Steering wheel"><svg class="s14"><use href="#wheel" /></svg></button>
            <svg class="s6"><use href="#caret" /></svg>
            <hr>
            <button aria-label="Zoom region"><svg class="s14"><use href="#zoomregion" /></svg></button>
            <svg class="s6"><use href="#caret" /></svg>
            <svg class="s6 r last"><use href="#ring" /></svg>
          </div>
          <div class="vbar thin"><svg class="s8"><use href="#chevu" /></svg><i></i><svg class="s8"><use href="#chevd" /></svg></div>
        </div>
        <div class="viewctl">
          <button class="scale">1/8" = 1'-0"</button>
          <button v-for="v in viewBar" :key="v" :aria-label="v"><svg class="s12"><use :href="'#' + v" /></svg></button>
          <button aria-label="Less"><svg class="s8"><use href="#chevl" /></svg></button>
          <div class="track"><i></i></div>
          <svg class="s8"><use href="#chevr" /></svg>
        </div>
      </section>
    </main>

    <footer class="status">
      <p>Click to select, TAB for alternates, CTRL adds, SHIFT unselects.</p>
      <div class="mid">
        <button aria-label="Worksets"><svg class="s12"><use href="#workset" /></svg></button>
        <span class="sel"><select aria-label="Active workset"><option></option></select><svg class="s8"><use href="#chevd" /></svg></span>
        <button class="cnt"><svg class="s12"><use href="#editable" /></svg>:0</button>
        <button aria-label="Design options"><svg class="s12"><use href="#options" /></svg></button>
        <button aria-label="Add to set"><svg class="s12"><use href="#optset" /></svg></button>
        <span class="sel"><select aria-label="Active design option"><option>Main Model</option></select><svg class="s8"><use href="#chevd" /></svg></span>
      </div>
      <div class="right">
        <button v-for="s in statusRight" :key="s" :aria-label="s"><svg class="s12"><use :href="'#' + s" /></svg></button>
        <span>:1</span>
      </div>
    </footer>
  </div>
</template>

<style>
html, body { margin: 0; background: #000; }
</style>

<style scoped>
.defs { display: none; }
.app {
  height: 100vh; box-sizing: border-box; padding: 12px 0 13px; background: #000; overflow: hidden;
  display: flex; flex-direction: column;
  font: 8px/12px Roboto, "Liberation Sans", sans-serif; color: #333;
}
h1, h2, p, ul { margin: 0; padding: 0; font-size: 8px; font-weight: 400; }
button, input, select { font: inherit; color: inherit; padding: 0; margin: 0; border: 0; background: none; }
button { display: flex; align-items: center; justify-content: center; }
svg { display: block; flex: none; }
.s6 { width: 6px; height: 6px; }
.s8 { width: 8px; height: 8px; }
.s10 { width: 10px; height: 10px; }
.s12 { width: 12px; height: 12px; }
.s14 { width: 14px; height: 14px; }
.s20 { width: 20px; height: 20px; }
.s22 { width: 22px; height: 20px; }

.titlebar { display: flex; align-items: flex-start; height: 19px; background: #cbcbcb; }
.quick {
  display: grid; height: 16px; align-items: center;
  grid-template-columns: 16px 16px 18px 16px 17px 8px 15px 8px 16px 8px 17px 23px 5px 17px 15px 17px 22px 6px 15px 19px 21px 13px 8px 14px;
}
.quick .on { height: 14px; margin: 0 1px; background: #b8dcf6; box-shadow: 0 0 0 1px #6aa7d6; }
.logo { font-size: 14px; font-weight: 700; color: #1d62a5; }
.titlebar h1 { flex: 1; line-height: 14px; text-align: center; white-space: nowrap; color: #444; }
.info {
  display: grid; align-items: center; justify-items: center; height: 16px;
  grid-template-columns: 10px 120px 17px 16px 54px 10px 18px 26px 6px 24px 14px 14px;
}
.info input { width: 100%; height: 15px; box-sizing: border-box; border: 1px solid #666; background: #fff; padding: 0 2px; color: #222; }
.info .name { justify-self: start; padding-left: 1px; color: #555; }
.tri { border: solid transparent; border-width: 2px 0 2px 3px; border-left-color: #333; }

.tabs { display: flex; gap: 13px; height: 14px; background: #cbcbcb; color: #444; }
.tabs button { white-space: nowrap; }
.tabs .file { width: 29px; margin-right: -7px; background: #2173b4; color: #fff; }
.tabs .ctx { margin: 0 2px 0 -6px; padding: 0 6px; background: #e3f0d7; color: #333; }
.tabs .mode { gap: 2px; }
.pm { width: 10px; height: 8px; }

.ribbon { display: flex; height: 64px; background: #e3f0d7; }
.panel { display: flex; flex-direction: column; flex: none; background: #f0f0f0; }
.panel h2 { display: flex; justify-content: center; align-items: center; height: 13px; line-height: 13px; white-space: nowrap; color: #444; }
.panel .body { height: 51px; display: flex; }
.green { background: #e3f0d7; }
.green .body { background: #f0f0f0; }
.p-select { width: 36px; }
.p-select h2 { gap: 2px; }
.p-props { width: 46px; }
.p-clip { width: 50px; }
.p-geo { width: 94px; }
.p-mod { width: 160px; }
.p-view { width: 43px; }
.p-meas { width: 38px; }
.p-create { width: 56px; }
.p-mode { width: 57px; }
.p-wall { width: 114px; }
.p-wall .body { padding-right: 3px; }
.tall { flex: 1; flex-direction: column; justify-content: flex-start; padding-top: 4px; line-height: 11px; }
.tall span { margin-top: 3px; }
.off { color: #b5b5b5; }
.on { background: #bbdcf5; box-shadow: inset 0 0 0 1px #82b4dc; }
.p-select .tall { margin: 1px 3px 1px 4px; }
.arrow { width: 12px; height: 18px; margin-top: 1px; }
.panel .stack { flex-direction: column; align-items: center; padding-top: 1px; box-sizing: border-box; }
.stack button { height: 24px; width: 26px; }
.stack .wide { width: 34px; gap: 3px; }
.p-clip .body { padding-right: 3px; }
.rows { display: flex; flex-direction: column; justify-content: space-around; }
.p-clip .tall { padding-left: 2px; }
.panel .body.rows { flex-direction: column; }
.georow { display: flex; align-items: center; gap: 4px; padding-left: 4px; }
.georow .lab { width: 45px; justify-content: flex-start; gap: 3px; }
.bigs { display: grid; grid-template-columns: repeat(4, 26px); grid-template-rows: 23px 23px; padding: 2px 0 0 1px; height: 46px; }
.bigs.two { grid-template-columns: 26px 26px; }
.smalls { display: grid; grid-template-columns: repeat(3, 17px); padding-left: 3px; }
.panel .viewgrid { display: grid; grid-template-columns: 18px 6px 18px; justify-items: center; align-items: center; }

.optbar { height: 17px; line-height: 19px; padding-left: 5px; background: #e3f0d7; color: #b3bbab; border-bottom: 1px solid #c9d3c0; }

.work { flex: 1; min-height: 0; display: flex; background: #fff; }
.side { width: 160px; flex: none; display: flex; flex-direction: column; border-right: 2px solid #dcdcdc; background: #f0f0f0; }
.cap { display: flex; justify-content: space-between; align-items: center; height: 15px; padding: 0 2px 0 1px; }
.type { width: 100%; height: 46px; justify-content: flex-start; gap: 3px; text-align: left; line-height: 11px; padding: 0 1px 0 2px; }
.thumb { width: 44px; height: 43px; background: #fff; display: flex; align-items: center; }
.thumb span { width: 43px; height: 6px; background: #bbb; border: solid #888; border-width: 1px 0; }
.tname { flex: 1; }
.filter { display: flex; height: 15px; gap: 4px; padding-top: 1px; }
.filter button { gap: 1px; white-space: nowrap; }
.sel { position: relative; display: flex; align-items: center; justify-content: flex-end; }
.sel svg { position: absolute; right: 1px; pointer-events: none; }
.sel select { appearance: none; width: 100%; height: 100%; border-radius: 0; }
.filter .sel { width: 107px; background: #e1e1e1; border: 1px solid #ccc; box-sizing: border-box; }
.gridwrap { display: flex; height: 186px; overflow: hidden; }
.grid { flex: 1; background: #fff; }
.ghead { display: flex; justify-content: space-between; align-items: center; height: 12px; padding: 0 1px; background: #dadada; }
table { width: 100%; height: 167px; border-collapse: collapse; table-layout: fixed; }
th, td { padding: 0; font-weight: 400; text-align: left; line-height: 11px; border: 1px solid #dedede; white-space: nowrap; overflow: hidden; color: #222; }
th { width: 64px; padding-left: 5px; border-left: 0; }
.end { width: 8px; border-right: 0; }
.end button { width: 7px; height: 11px; background: #ddd; border: 1px solid #aaa; }
.focus { outline: 1px solid #555; outline-offset: -1px; }
tr.off th, tr.off td { color: #999; }
td input[type=text] { display: block; width: 100%; height: 11px; padding-left: 1px; box-sizing: border-box; white-space: pre; }
td input[type=checkbox] { display: block; appearance: none; width: 9px; height: 9px; box-sizing: border-box; margin-left: 1px; border: 1px solid #ddd; }
td input[type=checkbox]:checked { border-color: #555; position: relative; }
td input[type=checkbox]:checked::after { content: ""; position: absolute; left: 2px; top: 0; width: 2px; height: 4px; border: solid #333; border-width: 0 1px 1px 0; transform: rotate(40deg); }
.vbar { width: 12px; flex: none; display: flex; flex-direction: column; align-items: center; justify-content: space-between; background: #f0f0f0; padding: 2px 0 1px; box-sizing: border-box; }
.vbar i { width: 100%; background: #cdcdcd; }
.vbar.long i { height: 78px; margin: 2px 0 auto; }
.vbar.longer i { height: 120px; margin: 1px 0 auto; }
.vbar.thin { width: 7px; }
.vbar.thin i { height: 10px; }
.props footer { display: flex; justify-content: space-between; align-items: center; height: 17px; padding: 0 2px 0 1px; }
.props footer a { color: #2a6fc0; }
.props footer button { width: 47px; height: 14px; background: #cfcfcf; color: #8d8d8d; }
.browser { flex: 1; min-height: 0; display: flex; flex-direction: column; border-top: 2px solid #dcdcdc; }
.browser .cap { height: 14px; }
.treewrap { flex: 1; min-height: 0; display: flex; overflow: hidden; background: #fff; }
.treewrap ul { flex: 1; min-width: 0; height: 259px; display: grid; grid-template-rows: repeat(22, 1fr); list-style: none; overflow: hidden; }
.treewrap li { display: flex; min-height: 0; margin-left: -2px; align-items: center; white-space: nowrap; }
.ticon { width: 12px; height: 12px; margin: 0 1px; }
.txt { padding: 0 2px; line-height: 11px; margin-left: 2px; color: #222; }
.root .txt { margin-left: 0; padding-left: 1px; }
.txt.sel { background: #dcdcdc; display: block; }
.bold { font-weight: 700; }
.g { position: relative; width: 14px; align-self: stretch; flex: none; }
.g-v::before, .g-t::before, .g-l::before { content: ""; position: absolute; left: 7px; top: 0; bottom: 0; border-left: 1px dotted #bbb; }
.g-l::before { bottom: 50%; }
.g-t::after, .g-l::after { content: ""; position: absolute; left: 7px; right: 0; top: 50%; border-top: 1px dotted #bbb; }
.g-b::before { content: ""; position: absolute; left: 4px; top: 3px; width: 5px; height: 5px; border: 1px solid #aaa; background: #fff; }
.g-b::after { content: ""; position: absolute; left: 6px; top: 6px; width: 3px; height: 1px; background: #666; }
.hbar { display: flex; align-items: center; height: 12px; padding: 0 12px 0 1px; }
.hbar i { width: 112px; height: 10px; margin: 0 auto 0 2px; background: #cdcdcd; }

.view { flex: 1; min-width: 0; display: flex; flex-direction: column; }
.doctabs { display: flex; justify-content: space-between; height: 15px; background: #cbcbcb; }
.doc { display: flex; align-items: center; width: 85px; padding: 0 2px; box-sizing: border-box; background: #fff; color: #222; gap: 4px; }
.doc b { flex: 1; }
.stage { flex: 1; min-height: 0; position: relative; display: flex; }
.plan { flex: 1; min-width: 0; width: 100%; height: 100%; }
.dimtext { font: 7px "Liberation Sans", sans-serif; fill: #2f57a0; }
.navbar { position: absolute; top: 0; right: 9px; width: 18px; height: 63px; box-sizing: border-box; border: 1px solid #c4c4c4; border-radius: 3px; background: #f4f4f4; display: flex; flex-direction: column; align-items: center; }
.navbar button { margin-top: 3px; }
.navbar hr { width: 12px; margin: 0; border: 0; border-top: 1px solid #ccc; }
.navbar .r { align-self: flex-end; }
.navbar .last { margin-top: auto; }
.navbar .s6 { opacity: .6; }
.viewctl { display: flex; align-items: center; height: 13px; padding-bottom: 1px; background: #f0f0f0; }
.viewctl button { width: 13px; flex: none; }
.viewctl .scale { width: 49px; white-space: nowrap; }
.track { flex: 1; align-self: stretch; display: flex; justify-content: center; }
.track i { width: 11px; background: #cdcdcd; }
.viewctl > svg { margin-right: 10px; }

.status { display: flex; align-items: center; height: 17px; background: #cbcbcb; border-top: 1px solid #ddd; box-sizing: border-box; }
.status p { flex: 62 1 0; white-space: nowrap; color: #222; }
.mid { display: flex; align-items: center; gap: 4px; }
.mid .sel { width: 136px; height: 14px; background: #fff; color: #888; }
.mid .sel select { padding-left: 2px; }
.cnt { width: 29px; gap: 2px; }
.right { flex: 26 1 0; display: flex; justify-content: flex-end; align-items: center; gap: 4px; padding-right: 36px; box-sizing: border-box; }
</style>
